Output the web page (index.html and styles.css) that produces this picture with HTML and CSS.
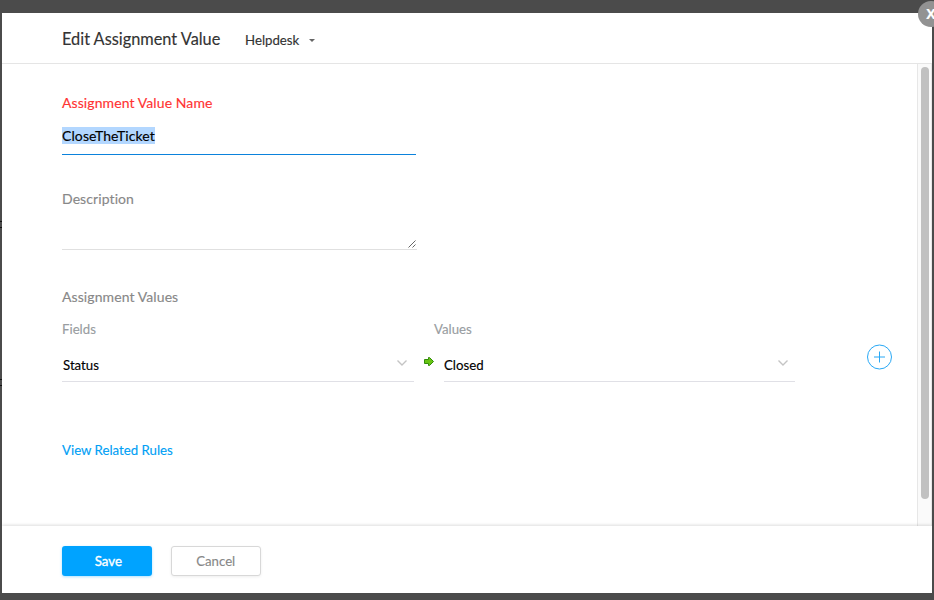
FILE: index.html
```html
<!DOCTYPE html>
<html lang="en">
<head>
<meta charset="utf-8">
<title>Edit Assignment Value</title>
<link rel="stylesheet" href="styles.css">
</head>
<body>
<main class="modal">
  <header class="header">
    <h1 class="title"><span class="narrow">Edit Assignment Value</span></h1>
    <span class="module"><span class="narrow">Helpdesk</span></span>
    <svg class="caret" width="6" height="3" viewBox="0 0 6 3"><path d="M0 0h6L3 3z" fill="#666"/></svg>
  </header>
  <div class="body">
    <form class="content">
      <label class="label required"><span>Assignment Value Name</span></label>
      <div class="name-input"><span class="selected">CloseTheTicket</span></div>
      <label class="label description"><span>Description</span></label>
      <div class="textarea"><svg class="resize" width="8" height="8" viewBox="0 0 8 8"><path d="M0.5 7.5l7-7M4.5 7.5l3-3" stroke="#555" stroke-width=".9" fill="none"/></svg></div>
      <h2 class="label section"><span>Assignment Values</span></h2>
      <div class="columns"><span class="column fields"><span class="narrow">Fields</span></span><span class="column"><span class="narrow">Values</span></span></div>
      <div class="mapping">
        <div class="select field"><span class="narrow">Status</span><svg class="chevron" width="12" height="8" viewBox="0 0 12 8"><path d="M1.5 1.5L6 6l4.5-4.5" fill="none" stroke="#c4c4c4" stroke-width="1.4"/></svg></div>
        <svg class="arrow" width="10" height="9" viewBox="0 0 10 9"><path d="M.5 2.5h4v-2h1l4 4-4 4h-1v-2h-4z" fill="#67c413" stroke="#328c0a"/></svg>
        <div class="select value"><span class="narrow">Closed</span><svg class="chevron" width="12" height="8" viewBox="0 0 12 8"><path d="M1.5 1.5L6 6l4.5-4.5" fill="none" stroke="#c4c4c4" stroke-width="1.4"/></svg></div>
        <svg class="add" width="26" height="26" viewBox="0 0 26 26" fill="none" stroke="#28a8f5"><circle cx="12.5" cy="13" r="12"/><path d="M7 13h11M12.5 7.5v11"/></svg>
      </div>
      <a class="related"><span class="narrow">View Related Rules</span></a>
    </form>
    <div class="track"><div class="thumb"></div></div>
  </div>
  <footer class="footer">
    <button class="button save"><span class="narrow">Save</span></button>
    <button class="button cancel"><span class="narrow">Cancel</span></button>
  </footer>
</main>
<div class="close">X</div>
<i class="edge edge-top"></i>
<i class="edge edge-bottom"></i>
</body>
</html>
```
FILE: styles.css
```css
* { box-sizing: border-box; }
body {
  margin: 0;
  height: 600px;
  padding: 13px 2px 7px;
  overflow: hidden;
  position: relative;
  background: #4b4b4b;
  font: 14px/20px Lato, sans-serif;
  color: #000;
  -webkit-text-stroke: .15px currentColor;
}
svg { display: block; flex: none; }
.narrow { display: inline-block; transform: scaleX(.945); transform-origin: left; }
.modal { height: 580px; display: flex; flex-direction: column; background: #fff; }
.header {
  height: 51px;
  flex: none;
  display: flex;
  align-items: center;
  padding: 3px 0 0 60px;
  border-bottom: 1px solid #e5e5e5;
  color: #333;
}
.title { width: 183px; margin: 0; padding-bottom: 2px; font-size: 17px; font-weight: 400; white-space: nowrap; }
.title .narrow { transform: scaleX(.96); }
.module { width: 63.5px; padding-top: 1px; }
.caret { margin-top: 2px; }
.body { height: 462px; flex: none; display: flex; }
.content { flex: 1; padding: 29px 0 0 60px; }
.label { display: block; height: 20px; margin: 0; color: #888; font-size: 14px; font-weight: 400; letter-spacing: .09px; }
.required { color: #f33; }
.name-input { width: 354px; height: 29px; margin-top: 13px; border-bottom: 1px solid #0b82dc; }
.selected { display: inline-block; height: 17px; margin-top: 1px; line-height: 18px; letter-spacing: .1px; background: #b3d7ff; vertical-align: top; }
.description { margin-top: 34px; }
.textarea { width: 355px; height: 41px; border-bottom: 1px solid #e0e0e0; display: flex; justify-content: flex-end; align-items: flex-end; }
.resize { margin: 0 1px 1px 0; }
.section { margin-top: 37px; }
.columns { display: flex; margin-top: 12px; color: #999da1; }
.column { display: block; }
.fields { width: 372px; }
.mapping { display: flex; margin-top: 5px; height: 38px; }
.select { height: 38px; display: flex; justify-content: space-between; border-bottom: 1px solid #e0e0e6; padding-top: 11px; }
.field { width: 352px; padding-left: 1px; padding-right: 6px; }
.value { width: 351px; margin-left: 10px; padding-right: 6px; }
.chevron { margin-top: 4px; }
.arrow { margin: 13px 0 0 10px; }
.add { margin: 0 0 0 72px; }
.related { display: block; margin-top: 58px; color: #00a0f5; }
.track { width: 15px; padding: 3px 2px 0 3px; background: #fafafa; border: solid #e7e7e7; border-width: 0 1px; }
.thumb { width: 8px; height: 432px; border-radius: 4px; background: #c1c1c1; }
.footer { flex: 1; position: relative; display: flex; gap: 19px; padding: 20px 0 0 60px; background: #fff; box-shadow: 0 -1px 3px #0002; clip-path: inset(-5px 0 0); }
.button { width: 90px; height: 30px; padding: 0; border-radius: 3px; font: inherit; }
.button .narrow { transform-origin: center; }
.save { border: 0; color: #fff; background: #00a3ff; padding-left: 3px; box-shadow: 0 1px 3px #00a3ff55; -webkit-text-stroke-width: .35px; }
.cancel { border: 1px solid #d8d8d8; color: #888; background: #fff; box-shadow: 0 1px 3px #0001; }
.close { position: absolute; left: 918px; top: 1px; width: 26px; height: 26px; border-radius: 50%; background: #929292; color: #fff; font: bold 14px/26px "Open Sans", sans-serif; text-align: center; }
.edge { position: absolute; left: 0; width: 2px; height: 7px; border: solid #111; border-width: 1px 0; }
.edge-top { top: 221px; }
.edge-bottom { top: 379px; }
```
